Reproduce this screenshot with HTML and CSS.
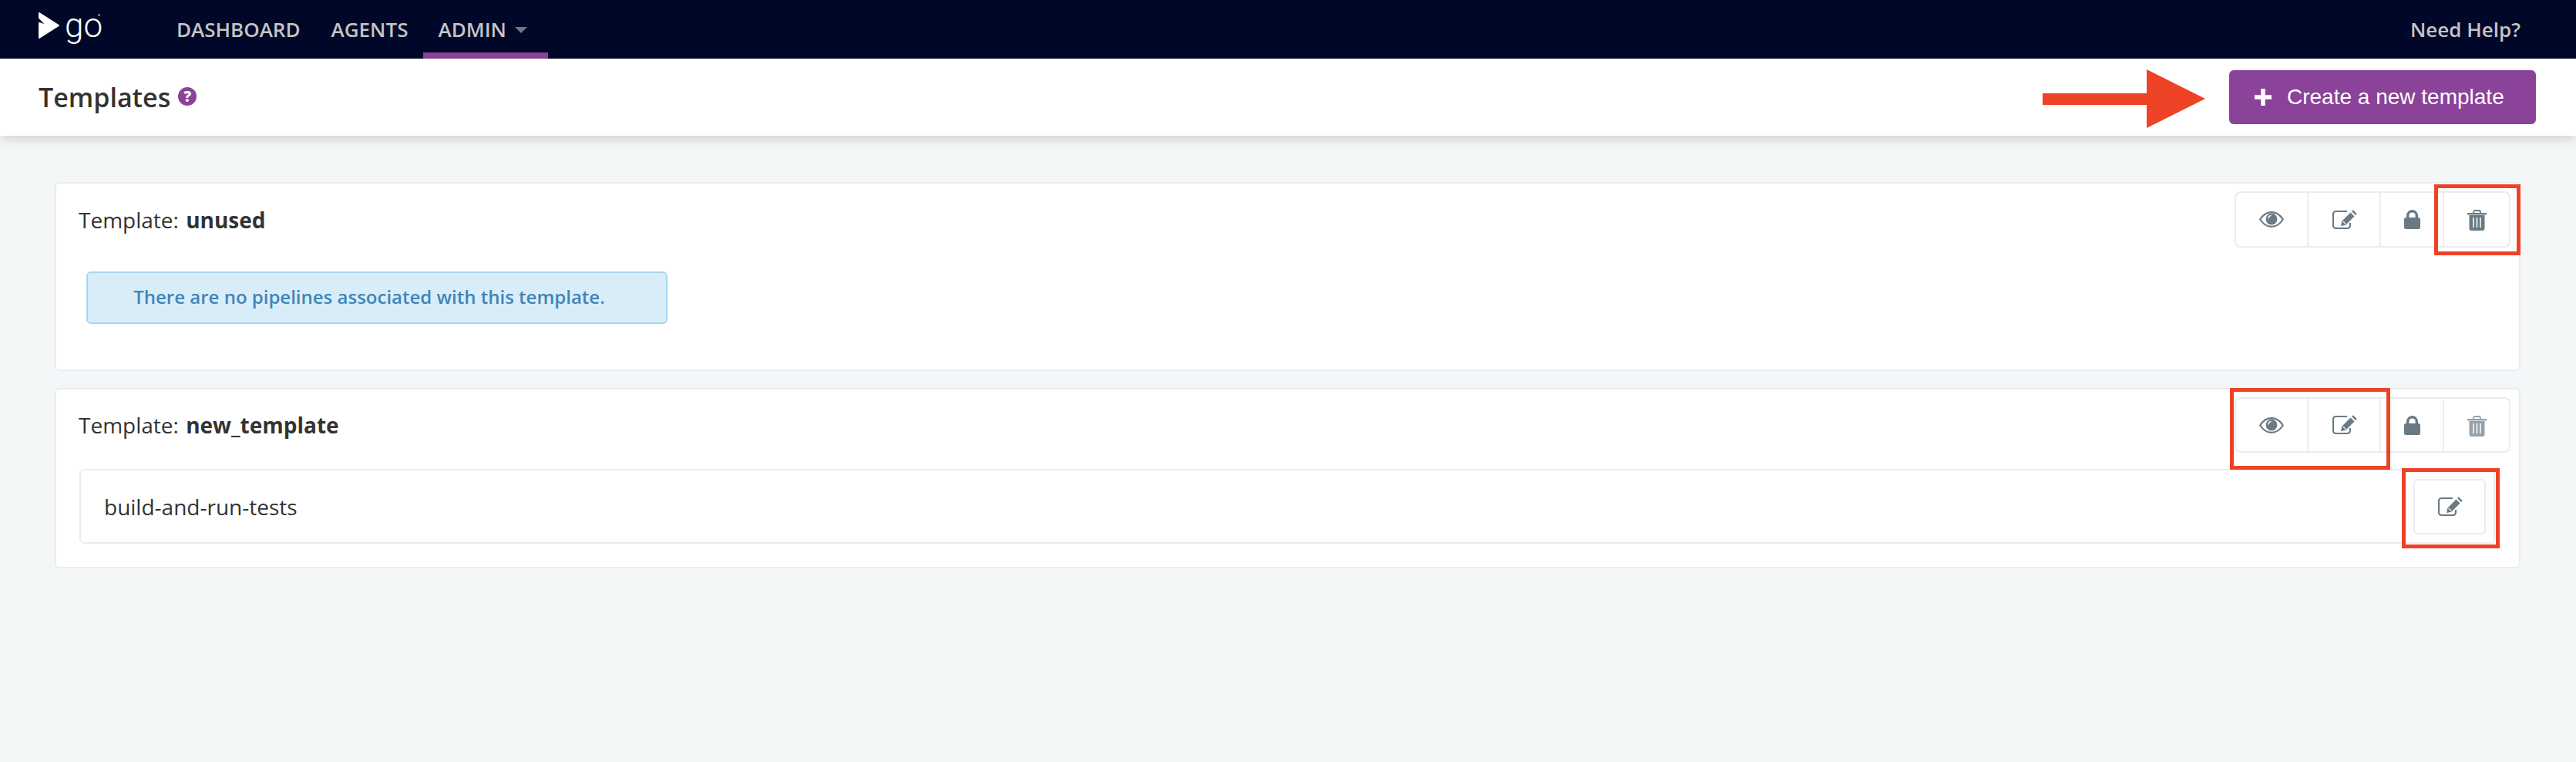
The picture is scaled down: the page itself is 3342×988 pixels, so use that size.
FILE: index.html
```html
<!DOCTYPE html>
<html lang="en">
<head>
    <meta charset="UTF-8">
    <title>Templates</title>
    <link rel="stylesheet" href="styles.css">
</head>
<body>
    <svg class="defs" width="0" height="0">
        <symbol id="eye" viewBox="0 0 32 21">
            <path d="M1.2 10.5C5 4.5 10 1.2 16 1.2S27 4.5 30.8 10.5C27 16.5 22 19.8 16 19.8S5 16.5 1.2 10.5Z" fill="none" stroke="currentColor" stroke-width="2.2"/>
            <circle cx="16" cy="10" r="7.4" fill="currentColor"/>
            <path d="M12 9.5c0-2.2 1.500-3.800 3.500-4" fill="none" stroke="#fff" stroke-width="1.300"/>
        </symbol>
        <symbol id="edit" viewBox="0 0 33 26">
            <path d="M20 2H5.500A3.500 3.500 0 0 0 2 5.500v15A3.500 3.500 0 0 0 5.500 24h15a3.500 3.500 0 0 0 3.500-3.500V17" fill="none" stroke="currentColor" stroke-width="2.200"/>
            <path d="M12 21l1.300-6.300L24.500 3.500l5 5L18.300 19.700Z" fill="currentColor"/>
            <path d="M26 2l1.800-1.800 5 5L31 7Z" fill="currentColor"/>
            <path d="M14.800 15.200l3.500 3.500" stroke="#fff" stroke-width="1.200"/>
        </symbol>
        <symbol id="lock" viewBox="0 0 21 25">
            <path d="M4.700 11V7.500a5.800 5.800 0 0 1 11.600 0V11" fill="none" stroke="currentColor" stroke-width="3.400"/>
            <rect x="0" y="10" width="21" height="15" rx="2.500" fill="currentColor"/>
        </symbol>
        <symbol id="trash" viewBox="0 0 25 27">
            <path d="M8 4.500V3a2 2 0 0 1 2-2h5a2 2 0 0 1 2 2v1.500" fill="none" stroke="currentColor" stroke-width="1.800"/>
            <rect x="0" y="4" width="25" height="2.400" fill="currentColor"/>
            <path d="M2.500 7h20v17a3 3 0 0 1-3 3h-14a3 3 0 0 1-3-3Z" fill="currentColor"/>
            <path d="M8 10v13M12.500 10v13M17 10v13" stroke="#fff" stroke-width="1.500"/>
        </symbol>
    </svg>

    <header class="site-header">
        <a class="logo">
            <svg class="logo-mark" viewBox="0 0 27 34"><path d="M1 1L26 17 1 33V14L11 17.500 1 7Z" fill="#fff" stroke="#fff" stroke-width="2" stroke-linejoin="round"/></svg>
            <span class="logo-text">go</span>
            <span class="logo-dot"></span>
        </a>
        <nav class="main-nav">
            <a class="nav-item">DASHBOARD</a>
            <a class="nav-item">AGENTS</a>
            <a class="nav-item active">ADMIN <span class="caret"></span></a>
        </nav>
        <a class="help-link">Need Help?</a>
    </header>

    <div class="page-header">
        <h1>Templates</h1>
        <span class="help-icon">?</span>
        <button class="primary-btn">
            <svg class="plus" viewBox="0 0 22 22"><path d="M11 0v22M0 11h22" stroke="#fff" stroke-width="5.500"/></svg>
            Create a new template
        </button>
    </div>

    <main class="templates">
        <section class="card card-unused">
            <div class="card-head">
                <div class="card-title">Template: <strong>unused</strong></div>
                <div class="btn-group">
                    <span class="icon-btn w-view"><svg class="i-eye"><use href="#eye"/></svg></span>
                    <span class="icon-btn w-edit"><svg class="i-edit"><use href="#edit"/></svg></span>
                    <span class="icon-btn w-lock"><svg class="i-lock"><use href="#lock"/></svg></span>
                    <span class="icon-btn w-trash"><svg class="i-trash"><use href="#trash"/></svg></span>
                </div>
            </div>
            <div class="alert">There are no pipelines associated with this template.</div>
        </section>

        <section class="card card-used">
            <div class="card-head">
                <div class="card-title">Template: <strong>new_template</strong></div>
                <div class="btn-group">
                    <span class="icon-btn w-view"><svg class="i-eye"><use href="#eye"/></svg></span>
                    <span class="icon-btn w-edit"><svg class="i-edit"><use href="#edit"/></svg></span>
                    <span class="icon-btn w-lock"><svg class="i-lock"><use href="#lock"/></svg></span>
                    <span class="icon-btn w-trash disabled"><svg class="i-trash"><use href="#trash"/></svg></span>
                </div>
            </div>
            <div class="pipeline-row">
                <span class="pipeline-name">build-and-run-tests</span>
                <span class="icon-btn single"><svg class="i-edit"><use href="#edit"/></svg></span>
            </div>
        </section>
    </main>

    <!-- annotations drawn on top of the screenshot -->
    <svg class="arrow" viewBox="0 0 211 76"><path d="M0 31H135V0L211 38 135 76V46H0Z" fill="#ee4226"/></svg>
    <div class="mark mark-trash"></div>
    <div class="mark mark-view-edit"></div>
    <div class="mark mark-row-edit"></div>
</body>
</html>
```

FILE: styles.css
```css
body {
    font-family: "Open Sans", Arial, sans-serif;
    background-color: #f4f7f8;
    color: #333333;
    margin: 0;
    height: 988px;
    overflow: hidden;
    position: relative;
}

.defs {
    position: absolute;
}

.site-header {
    display: flex;
    align-items: stretch;
    height: 76px;
    padding: 0 72px 0 50px;
    background-color: #000728;
    box-sizing: border-box;
}

.logo {
    display: flex;
    align-items: flex-start;
    width: 159px;
    position: relative;
}

.logo-mark {
    width: 27px;
    height: 34px;
    margin-top: 16px;
}

.logo-text {
    font-family: Roboto, sans-serif;
    font-weight: 300;
    font-size: 44px;
    line-height: 44px;
    color: #ffffff;
    margin: 11px 0 0 7px;
}

.logo-dot {
    position: absolute;
    left: 77px;
    top: 18px;
    width: 3px;
    height: 3px;
    border-radius: 50%;
    background: #8a8f9f;
}

.main-nav {
    display: flex;
}

.nav-item {
    display: flex;
    align-items: center;
    padding: 0 20px;
    font-size: 26px;
    font-weight: 600;
    color: #c4c4c4;
    box-sizing: border-box;
}

.nav-item.active {
    width: 162px;
    padding: 8px 19px 0;
    border-bottom: 8px solid #8a4398;
}

.caret {
    width: 0;
    height: 0;
    margin: 2px 0 0 11px;
    border-left: 8px solid transparent;
    border-right: 8px solid transparent;
    border-top: 8px solid #6a7a85;
}

.help-link {
    margin-left: auto;
    align-self: center;
    font-size: 26px;
    font-weight: 600;
    color: #c4c4c4;
}

.page-header {
    display: flex;
    align-items: center;
    height: 100px;
    padding: 0 52px 0 50px;
    background: #ffffff;
    box-shadow: 0 4px 14px rgba(0, 0, 0, 0.16);
    box-sizing: border-box;
    position: relative;
}

h1 {
    margin: 0;
    font-size: 34px;
    font-weight: 600;
    color: #333333;
}

.help-icon {
    width: 24px;
    height: 24px;
    margin-left: 10px;
    margin-bottom: 2px;
    border-radius: 50%;
    background: #8a4398;
    color: #ffffff;
    font-size: 19px;
    font-weight: 800;
    line-height: 24px;
    text-align: center;
}

.primary-btn {
    display: flex;
    align-items: center;
    margin-left: auto;
    width: 398px;
    height: 70px;
    padding: 0 0 0 33px;
    border: none;
    border-radius: 6px;
    background-color: #8a4398;
    color: #ffffff;
    font-family: "Liberation Sans", Arial, sans-serif;
    font-size: 28px;
    box-sizing: border-box;
}

.plus {
    width: 22px;
    height: 22px;
    margin-right: 20px;
}

.templates {
    display: flex;
    flex-direction: column;
    gap: 22px;
    padding: 60px 72px 0 71px;
}

.card {
    background: #ffffff;
    border: 2px solid #e9edf0;
    border-radius: 6px;
    padding: 10px 11px 0 29px;
}

.card-unused {
    height: 245px;
    box-sizing: border-box;
}

.card-used {
    height: 234px;
    box-sizing: border-box;
}

.card-head {
    display: flex;
    align-items: center;
    justify-content: space-between;
}

.card-title {
    font-size: 28px;
    color: #333333;
}

.card-title strong {
    font-weight: 700;
    margin-left: 2px;
}

.btn-group {
    display: flex;
    flex: 0 0 358px;
    height: 73px;
    border: 2px solid #e9edf0;
    border-radius: 8px;
    box-sizing: border-box;
}

.card-used .btn-group {
    height: 72px;
}

.icon-btn {
    display: flex;
    align-items: center;
    justify-content: center;
    color: #6a7a85;
    box-sizing: border-box;
}

.w-view, .w-edit, .w-lock {
    border-right: 2px solid #e9edf0;
}

.w-view { width: 94px; }
.w-edit { width: 94px; }
.w-lock { width: 82px; }
.w-trash { flex: 1; }

.disabled {
    opacity: 0.7;
}

.i-eye { width: 32px; height: 21px; }
.i-edit { width: 33px; height: 26px; }
.i-lock { width: 21px; height: 25px; }
.i-trash { width: 25px; height: 27px; }

.w-trash svg {
    margin-top: 2px;
}

.alert {
    width: 754px;
    height: 68px;
    margin: 31px 0 0 10px;
    padding-right: 20px;
    border: 2px solid #a9d6ef;
    border-radius: 6px;
    background: #d9edf8;
    color: #3f85b8;
    font-size: 24px;
    font-weight: 600;
    line-height: 62px;
    text-align: center;
    box-sizing: border-box;
}

.pipeline-row {
    display: flex;
    align-items: center;
    justify-content: space-between;
    height: 97px;
    margin: 21px 20px 0 1px;
    padding: 0 10px 0 30px;
    border: 2px solid #e9edf0;
    border-radius: 6px;
    box-sizing: border-box;
}

.pipeline-name {
    font-size: 28px;
}

.icon-btn.single {
    width: 94px;
    height: 72px;
    border: 2px solid #e9edf0;
    border-radius: 6px;
}

.arrow {
    position: absolute;
    left: 2650px;
    top: 90px;
    width: 211px;
    height: 76px;
}

.mark {
    position: absolute;
    border: 5px solid #ee4226;
    box-sizing: border-box;
}

.mark-trash {
    left: 3158px;
    top: 239px;
    width: 112px;
    height: 92px;
}

.mark-view-edit {
    left: 2893px;
    top: 503px;
    width: 208px;
    height: 106px;
}

.mark-row-edit {
    left: 3116px;
    top: 607px;
    width: 127px;
    height: 104px;
}
```
